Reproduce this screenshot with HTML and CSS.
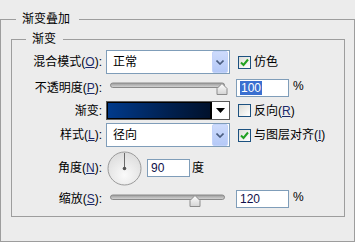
FILE: index.html
```html
<!DOCTYPE html>
<html lang="zh-CN">
<head>
    <meta charset="UTF-8">
    <meta name="viewport" content="width=device-width, initial-scale=1.0">
    <title>渐变叠加</title>
    <link rel="stylesheet" href="styles.css">
</head>
<body>
    <fieldset class="panel">
        <legend class="panel-title">渐变叠加</legend>
        <fieldset class="group">
            <legend class="group-title">渐变</legend>
            <div class="form-grid">
                <!-- Blend mode -->
                <span class="field-label">混合模式(<u>O</u>):</span>
                <div class="select">
                    <span class="select-value">正常</span>
                    <span class="select-btn">
                        <svg width="8" height="5" viewBox="0 0 8 5"><path d="M0.5 0.5 L4 4 L7.5 0.5" fill="none" stroke="#4a5d80" stroke-width="1.6"/></svg>
                    </span>
                </div>
                <label class="check">
                    <span class="box"><svg width="11" height="11" viewBox="0 0 11 11"><path d="M2 5.5 L4.5 8 L9 2.5" fill="none" stroke="#21a121" stroke-width="2"/></svg></span>
                    <span>仿色</span>
                </label>

                <!-- Opacity -->
                <span class="field-label">不透明度(<u>P</u>):</span>
                <div class="slider">
                    <svg width="120" height="14" viewBox="0 0 120 14">
                        <defs>
                            <linearGradient id="track" x1="0" y1="0" x2="0" y2="1">
                                <stop offset="0" stop-color="#9a9a9a"/>
                                <stop offset="1" stop-color="#d8d8d8"/>
                            </linearGradient>
                            <linearGradient id="thumb" x1="0" y1="0" x2="0" y2="1">
                                <stop offset="0" stop-color="#ffffff"/>
                                <stop offset="1" stop-color="#d4d4d4"/>
                            </linearGradient>
                        </defs>
                        <rect x="1.5" y="2" width="114" height="4.5" rx="2.2" fill="url(#track)" stroke="#8a8a8a"/>
                        <path d="M108 13.5 L108 7.5 L113 2.5 L118 7.5 L118 13.5 Z" fill="url(#thumb)" stroke="#8c8c8c"/>
                    </svg>
                </div>
                <div class="amount">
                    <span class="input"><span class="selected">100</span></span>
                    <span class="unit">%</span>
                </div>

                <!-- Gradient -->
                <span class="field-label">渐变:</span>
                <div class="gradient">
                    <span class="gradient-swatch"></span>
                    <span class="gradient-btn">
                        <svg width="9" height="5" viewBox="0 0 9 5"><path d="M0 0 L9 0 L4.5 5 Z" fill="#000"/></svg>
                    </span>
                </div>
                <label class="check">
                    <span class="box"></span>
                    <span>反向(<u>R</u>)</span>
                </label>

                <!-- Style -->
                <span class="field-label">样式(<u>L</u>):</span>
                <div class="select">
                    <span class="select-value">径向</span>
                    <span class="select-btn">
                        <svg width="8" height="5" viewBox="0 0 8 5"><path d="M0.5 0.5 L4 4 L7.5 0.5" fill="none" stroke="#4a5d80" stroke-width="1.6"/></svg>
                    </span>
                </div>
                <label class="check">
                    <span class="box"><svg width="11" height="11" viewBox="0 0 11 11"><path d="M2 5.5 L4.5 8 L9 2.5" fill="none" stroke="#21a121" stroke-width="2"/></svg></span>
                    <span>与图层对齐(<u>I</u>)</span>
                </label>

                <!-- Angle -->
                <span class="field-label">角度(<u>N</u>):</span>
                <div class="angle">
                    <svg width="35" height="35" viewBox="0 0 35 35">
                        <defs>
                            <radialGradient id="dial" cx="0.5" cy="0.7" r="0.7">
                                <stop offset="0" stop-color="#fafafa"/>
                                <stop offset="1" stop-color="#dcdcdc"/>
                            </radialGradient>
                        </defs>
                        <circle cx="17.5" cy="17.5" r="16.5" fill="url(#dial)" stroke="#9a9a9a"/>
                        <line x1="17.5" y1="17.5" x2="17.5" y2="2" stroke="#6a6a6a" stroke-width="1"/>
                        <circle cx="17.5" cy="17.5" r="1.8" fill="#555"/>
                    </svg>
                    <span class="input small">90</span>
                    <span class="unit-cn">度</span>
                </div>
                <span></span>

                <!-- Scale -->
                <span class="field-label">缩放(<u>S</u>):</span>
                <div class="slider">
                    <svg width="120" height="14" viewBox="0 0 120 14">
                        <rect x="1.5" y="2" width="114" height="4.5" rx="2.2" fill="url(#track)" stroke="#8a8a8a"/>
                        <path d="M81 13.5 L81 7.5 L86 2.5 L91 7.5 L91 13.5 Z" fill="url(#thumb)" stroke="#8c8c8c"/>
                    </svg>
                </div>
                <div class="amount">
                    <span class="input">120</span>
                    <span class="unit">%</span>
                </div>
            </div>
        </fieldset>
    </fieldset>
</body>
</html>
```

FILE: styles.css
```css
* {
    box-sizing: border-box;
}
body {
    margin: 0;
    background: #ececec;
    font-family: "Liberation Sans", "Noto Sans CJK SC", sans-serif;
    font-size: 12px;
    line-height: 16px;
    color: #000;
}
u {
    text-decoration: underline;
    color: #1a2a6a;
}
.panel {
    margin: 11px 0 0 0;
    height: 231px;
    padding: 4px 9px 0 10px;
    border: 1px solid #9d9d9d;
    min-width: 0;
}
.panel-title {
    margin-left: 5px;
    padding: 0 9px 0 6px;
    font-size: 12px;
}
.group {
    margin: 0;
    height: 186px;
    padding: 2px 0 0 0;
    border: 1px solid #9d9d9d;
    min-width: 0;
}
.group-title {
    margin-left: 14px;
    padding: 0 7px 0 6px;
}
.form-grid {
    display: grid;
    grid-template-columns: 94px 130px 1fr;
    grid-template-rows: 26px 25px 21px 28px 38px 24px;
    align-items: center;
}
.field-label {
    text-align: right;
    padding-right: 4px;
    white-space: nowrap;
}
.select {
    display: flex;
    width: 124px;
    height: 24px;
    border: 1px solid #7f9db9;
    background: #fff;
}
.select-value {
    flex: 1;
    padding-left: 6px;
    line-height: 22px;
}
.select-btn {
    width: 16px;
    margin-right: 1px;
    display: flex;
    align-items: center;
    justify-content: center;
    background: linear-gradient(#cddbfc, #b5c9f7);
    border: 1px solid #c3d3fa;
    border-radius: 2px;
}
.check {
    display: flex;
    align-items: center;
    gap: 3px;
    margin-left: 2px;
    white-space: nowrap;
}
.box {
    width: 13px;
    height: 13px;
    border: 1px solid #1c5180;
    background: linear-gradient(135deg, #dcdcd7, #ffffff);
    display: flex;
}
.slider {
    display: flex;
    padding-left: 3px;
    padding-top: 1px;
}
.amount {
    display: flex;
    align-items: center;
}
.input {
    width: 53px;
    height: 18px;
    border: 1px solid #7f9db9;
    background: #fff;
    padding-left: 3px;
    font-size: 12px;
    line-height: 16px;
    color: #10104a;
}
.input.small {
    width: 43px;
    height: 18px;
}
.selected {
    background: #3a6fd0;
    color: #fff;
    padding: 0 1px;
}
.unit {
    margin-left: 4px;
    margin-top: -4px;
}
.gradient {
    display: flex;
    width: 124px;
    height: 19px;
    border: 1px solid #5a5a5a;
    background: #fff;
}
.gradient-swatch {
    flex: 1;
    border: 1px solid #000;
    border-right-width: 2px;
    background: linear-gradient(to right, #003a8b, #00204f 60%, #00112c);
}
.gradient-btn {
    width: 17px;
    display: flex;
    align-items: center;
    justify-content: center;
}
.angle {
    display: flex;
    align-items: center;
    gap: 5px;
    padding-left: 1px;
}
.unit-cn {
    margin-left: -3px;
}
```
